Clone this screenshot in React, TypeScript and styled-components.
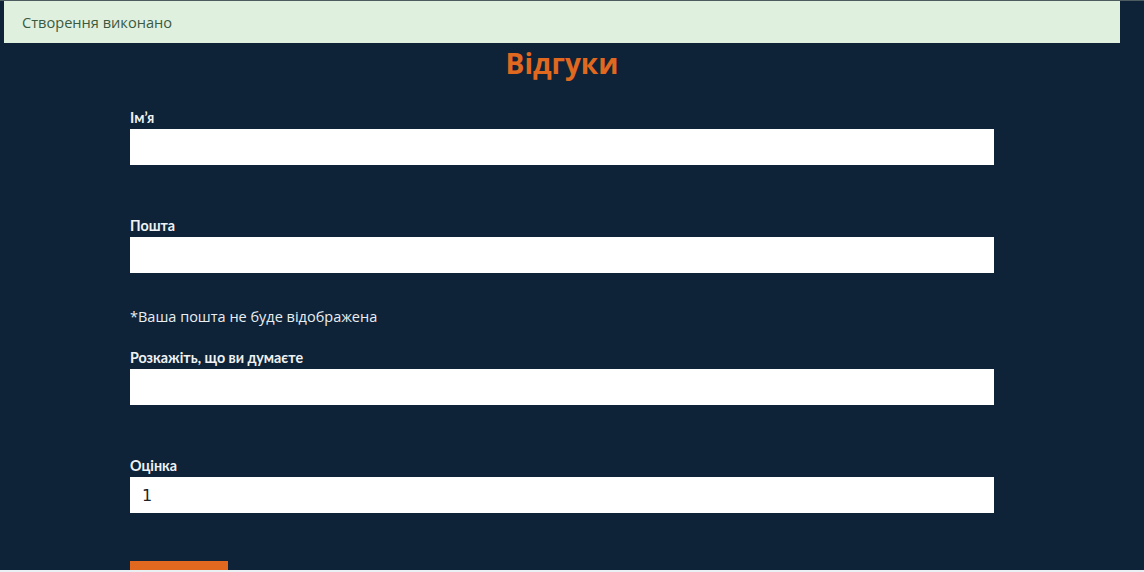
import React from "react";
import styled, { createGlobalStyle } from "styled-components";

const Global = createGlobalStyle`
  html, body { margin: 0; padding: 0; }
  body {
    background: #e9f1f5;
    font-family: "Open Sans", "Noto Sans", sans-serif;
    overflow: hidden;
  }
  * { box-sizing: border-box; }
`;

const Page = styled.div`
  height: 570px;
  overflow: hidden;
  background: #0f2338;
  border-top: 1px solid #4c5c60;
`;

const Wrap = styled.div`
  width: 1124px;
`;

const Alert = styled.div`
  margin: 0 4px;
  height: 42px;
  background: #dff0df;
  color: #3b5a3f;
  font-size: 14.6px;
  line-height: 42px;
  padding-left: 18px;
`;

const Title = styled.h1`
  margin: 0;
  text-align: center;
  color: #e0691f;
  font-family: "Open Sans", sans-serif;
  font-weight: 700;
  font-size: 28px;
  line-height: 40px;
`;

const Form = styled.form`
  width: 864px;
  margin: 0 auto 0 130px;
  padding-top: 27px;
`;

const Field = styled.div<{ $gap: number }>`
  margin-bottom: ${(p) => p.$gap}px;
`;

const Label = styled.label`
  display: block;
  font-family: Lato, sans-serif;
  font-weight: 700;
  font-size: 14.3px;
  line-height: 16px;
  color: #eef2f4;
  margin-bottom: 3px;
`;

const Input = styled.input`
  display: block;
  width: 100%;
  height: 36px;
  border: none;
  outline: none;
  background: #ffffff;
  padding: 0 12px;
  font-family: "DejaVu Sans", sans-serif;
  font-size: 16px;
  color: #222;
`;

const Note = styled.p`
  margin: 0 0 23px;
  font-size: 14.5px;
  line-height: 20px;
  color: #e9eef2;
`;

const Submit = styled.button`
  display: block;
  width: 98px;
  height: 40px;
  border: none;
  background: #e0691f;
  color: #fff;
`;

export default function App() {
  return (
    <>
      <Global />
      <Page>
        <Wrap>
          <Alert>Створення виконано</Alert>
          <Title>Відгуки</Title>
          <Form onSubmit={(e) => e.preventDefault()}>
            <Field $gap={53}>
              <Label>Ім’я</Label>
              <Input type="text" />
            </Field>
            <Field $gap={34}>
              <Label>Пошта</Label>
              <Input type="email" />
            </Field>
            <Note>*Ваша пошта не буде відображена</Note>
            <Field $gap={53}>
              <Label>Розкажіть, що ви думаєте</Label>
              <Input type="text" />
            </Field>
            <Field $gap={48}>
              <Label>Оцінка</Label>
              <Input type="number" defaultValue={1} />
            </Field>
            <Submit type="submit" aria-label="Надіслати" />
          </Form>
        </Wrap>
      </Page>
    </>
  );
}
